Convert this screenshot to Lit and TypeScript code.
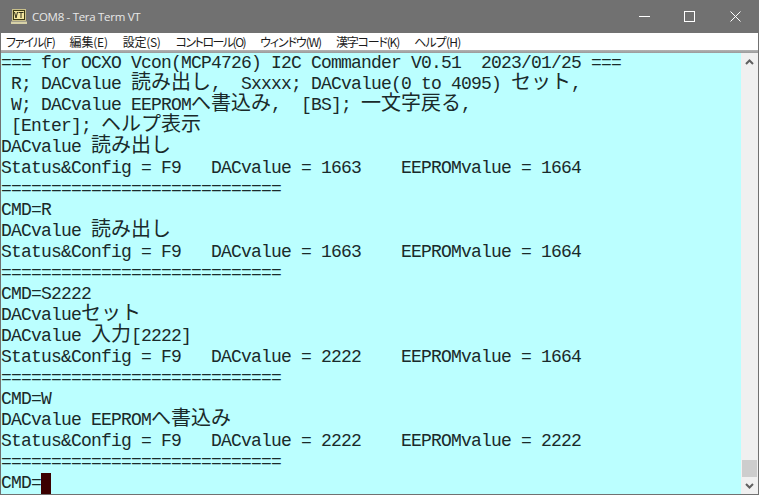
import { LitElement, html, css } from "lit";
import { customElement } from "lit/decorators.js";

const LINES = [
  "=== for OCXO Vcon(MCP4726) I2C Commander V0.51  2023/01/25 ===",
  " R; DACvalue 読み出し,  Sxxxx; DACvalue(0 to 4095) セット,",
  " W; DACvalue EEPROMへ書込み,  [BS]; 一文字戻る,",
  " [Enter]; ヘルプ表示",
  "DACvalue 読み出し",
  "Status&Config = F9   DACvalue = 1663    EEPROMvalue = 1664",
  "============================",
  "CMD=R",
  "DACvalue 読み出し",
  "Status&Config = F9   DACvalue = 1663    EEPROMvalue = 1664",
  "============================",
  "CMD=S2222",
  "DACvalueセット",
  "DACvalue 入力[2222]",
  "Status&Config = F9   DACvalue = 2222    EEPROMvalue = 1664",
  "============================",
  "CMD=W",
  "DACvalue EEPROMへ書込み",
  "Status&Config = F9   DACvalue = 2222    EEPROMvalue = 2222",
  "============================",
];
const MENU: [string, number][] = [
  ["ファイル(F)", -1.1],
  ["編集(E)", -0.2],
  ["設定(S)", -0.3],
  ["コントロール(O)", -1.5],
  ["ウィンドウ(W)", -1.1],
  ["漢字コード(K)", -1.2],
  ["ヘルプ(H)", -0.8],
];

function segs(line: string) {
  return (line.match(/[\x00-\x7f]+|[^\x00-\x7f]+/g) ?? []).map((s) =>
    /^[\x00-\x7f]/.test(s) ? html`<span class="lat">${s}</span>` : html`<span class="cjk">${s}</span>`
  );
}

@customElement("app-root")
export class AppRoot extends LitElement {
  static styles = css`
    :host { display: block; width: 759px; height: 495px; overflow: hidden; background: #717171; }
    .title { height: 33px; background: #717171; display: flex; align-items: center; color: #e8e8e8;
      font: 11.5px "Open Sans", "Noto Sans", sans-serif; letter-spacing: -0.3px; padding-right: 1px; }
    .appicon { margin-left: 11px; margin-right: 5px; width: 16px; height: 16px; flex: none; }
    .caption { flex: 1; margin-top: -1px; white-space: nowrap; }
    .wbtn { width: 45.5px; height: 32px; display: flex; align-items: center; justify-content: center; flex: none; }
    .menu { height: 17px; background: #fff; margin: 0 1px; display: flex; align-items: center; padding-left: 5px; gap: 15px;
      font: 12px/16px "Noto Sans CJK JP", sans-serif; font-feature-settings: "palt"; color: #1a1a1a; white-space: nowrap; }
    .rule { height: 3px; margin: 0 1px; background: linear-gradient(#b4b4b4, #9a9a9a); }
    .client { display: flex; height: 441px; margin: 0 1px; background: #bbffff; }
    .term { flex: 1; min-width: 0; background: #bbffff; color: #1a2a2a; overflow: hidden; }
    .line { height: 21px; font: 18px/21px "Liberation Mono", monospace; white-space: pre; }
    .lat { font: 18px/0 "Liberation Mono", monospace; letter-spacing: -0.8px; }
    .cjk { font: 20px/0 "Noto Sans CJK JP", sans-serif; }
    .cursor { display: inline-block; vertical-align: top; width: 10px; height: 21px; background: #3b0000; }
    .sb { width: 17px; flex: none; background: #f0f0f0; display: flex; flex-direction: column; }
    .arrow { height: 17px; display: flex; align-items: center; justify-content: center; flex: none; }
    .track { flex: 1; display: flex; flex-direction: column; justify-content: flex-end; }
    .thumb { height: 17px; background: #cdcdcd; margin: 0 1px; }
  `;
  render() {
    return html`
      <div class="title">
        <svg class="appicon" viewBox="0 0 16 16">
          <rect x="1.5" y="0.5" width="13" height="11" fill="#3c3c14" stroke="#c9c08a"/>
          <rect x="3" y="2" width="10" height="8" fill="#f4e7a0"/>
          <path d="M3.5 3l1.5 6 1.5-6M7.5 3.5h5M10 3.5V9" fill="none" stroke="#30301c" stroke-width="1"/>
          <rect x="0" y="12.5" width="16" height="2.5" fill="#d8d2a8"/>
        </svg>
        <span class="caption">COM8 - Tera Term VT</span>
        <div class="wbtn"><svg width="11" height="11" viewBox="0 0 11 11"><path d="M0 5.5h11" stroke="#fff"/></svg></div>
        <div class="wbtn"><svg width="11" height="11" viewBox="0 0 11 11"><rect x="0.5" y="0.5" width="10" height="10" fill="none" stroke="#fff"/></svg></div>
        <div class="wbtn"><svg width="11" height="11" viewBox="0 0 11 11"><path d="M0.5 0.5l10 10M10.5 0.5l-10 10" stroke="#fff"/></svg></div>
      </div>
      <div class="menu">${MENU.map(([m, ls]) => html`<span style="letter-spacing:${ls}px">${m}</span>`)}</div>
      <div class="rule"></div>
      <div class="client">
        <div class="term">
          ${LINES.map((l) => html`<div class="line">${segs(l)}</div>`)}
          <div class="line"><span class="lat">CMD=</span><span class="cursor"></span></div>
        </div>
        <div class="sb">
          <div class="arrow"><svg width="9" height="6" viewBox="0 0 9 6"><path d="M1 5l3.5-3.5L8 5" fill="none" stroke="#606060" stroke-width="2"/></svg></div>
          <div class="track"><div class="thumb"></div></div>
          <div class="arrow"><svg width="9" height="6" viewBox="0 0 9 6"><path d="M1 1l3.5 3.5L8 1" fill="none" stroke="#606060" stroke-width="2"/></svg></div>
        </div>
      </div>
    `;
  }
}
